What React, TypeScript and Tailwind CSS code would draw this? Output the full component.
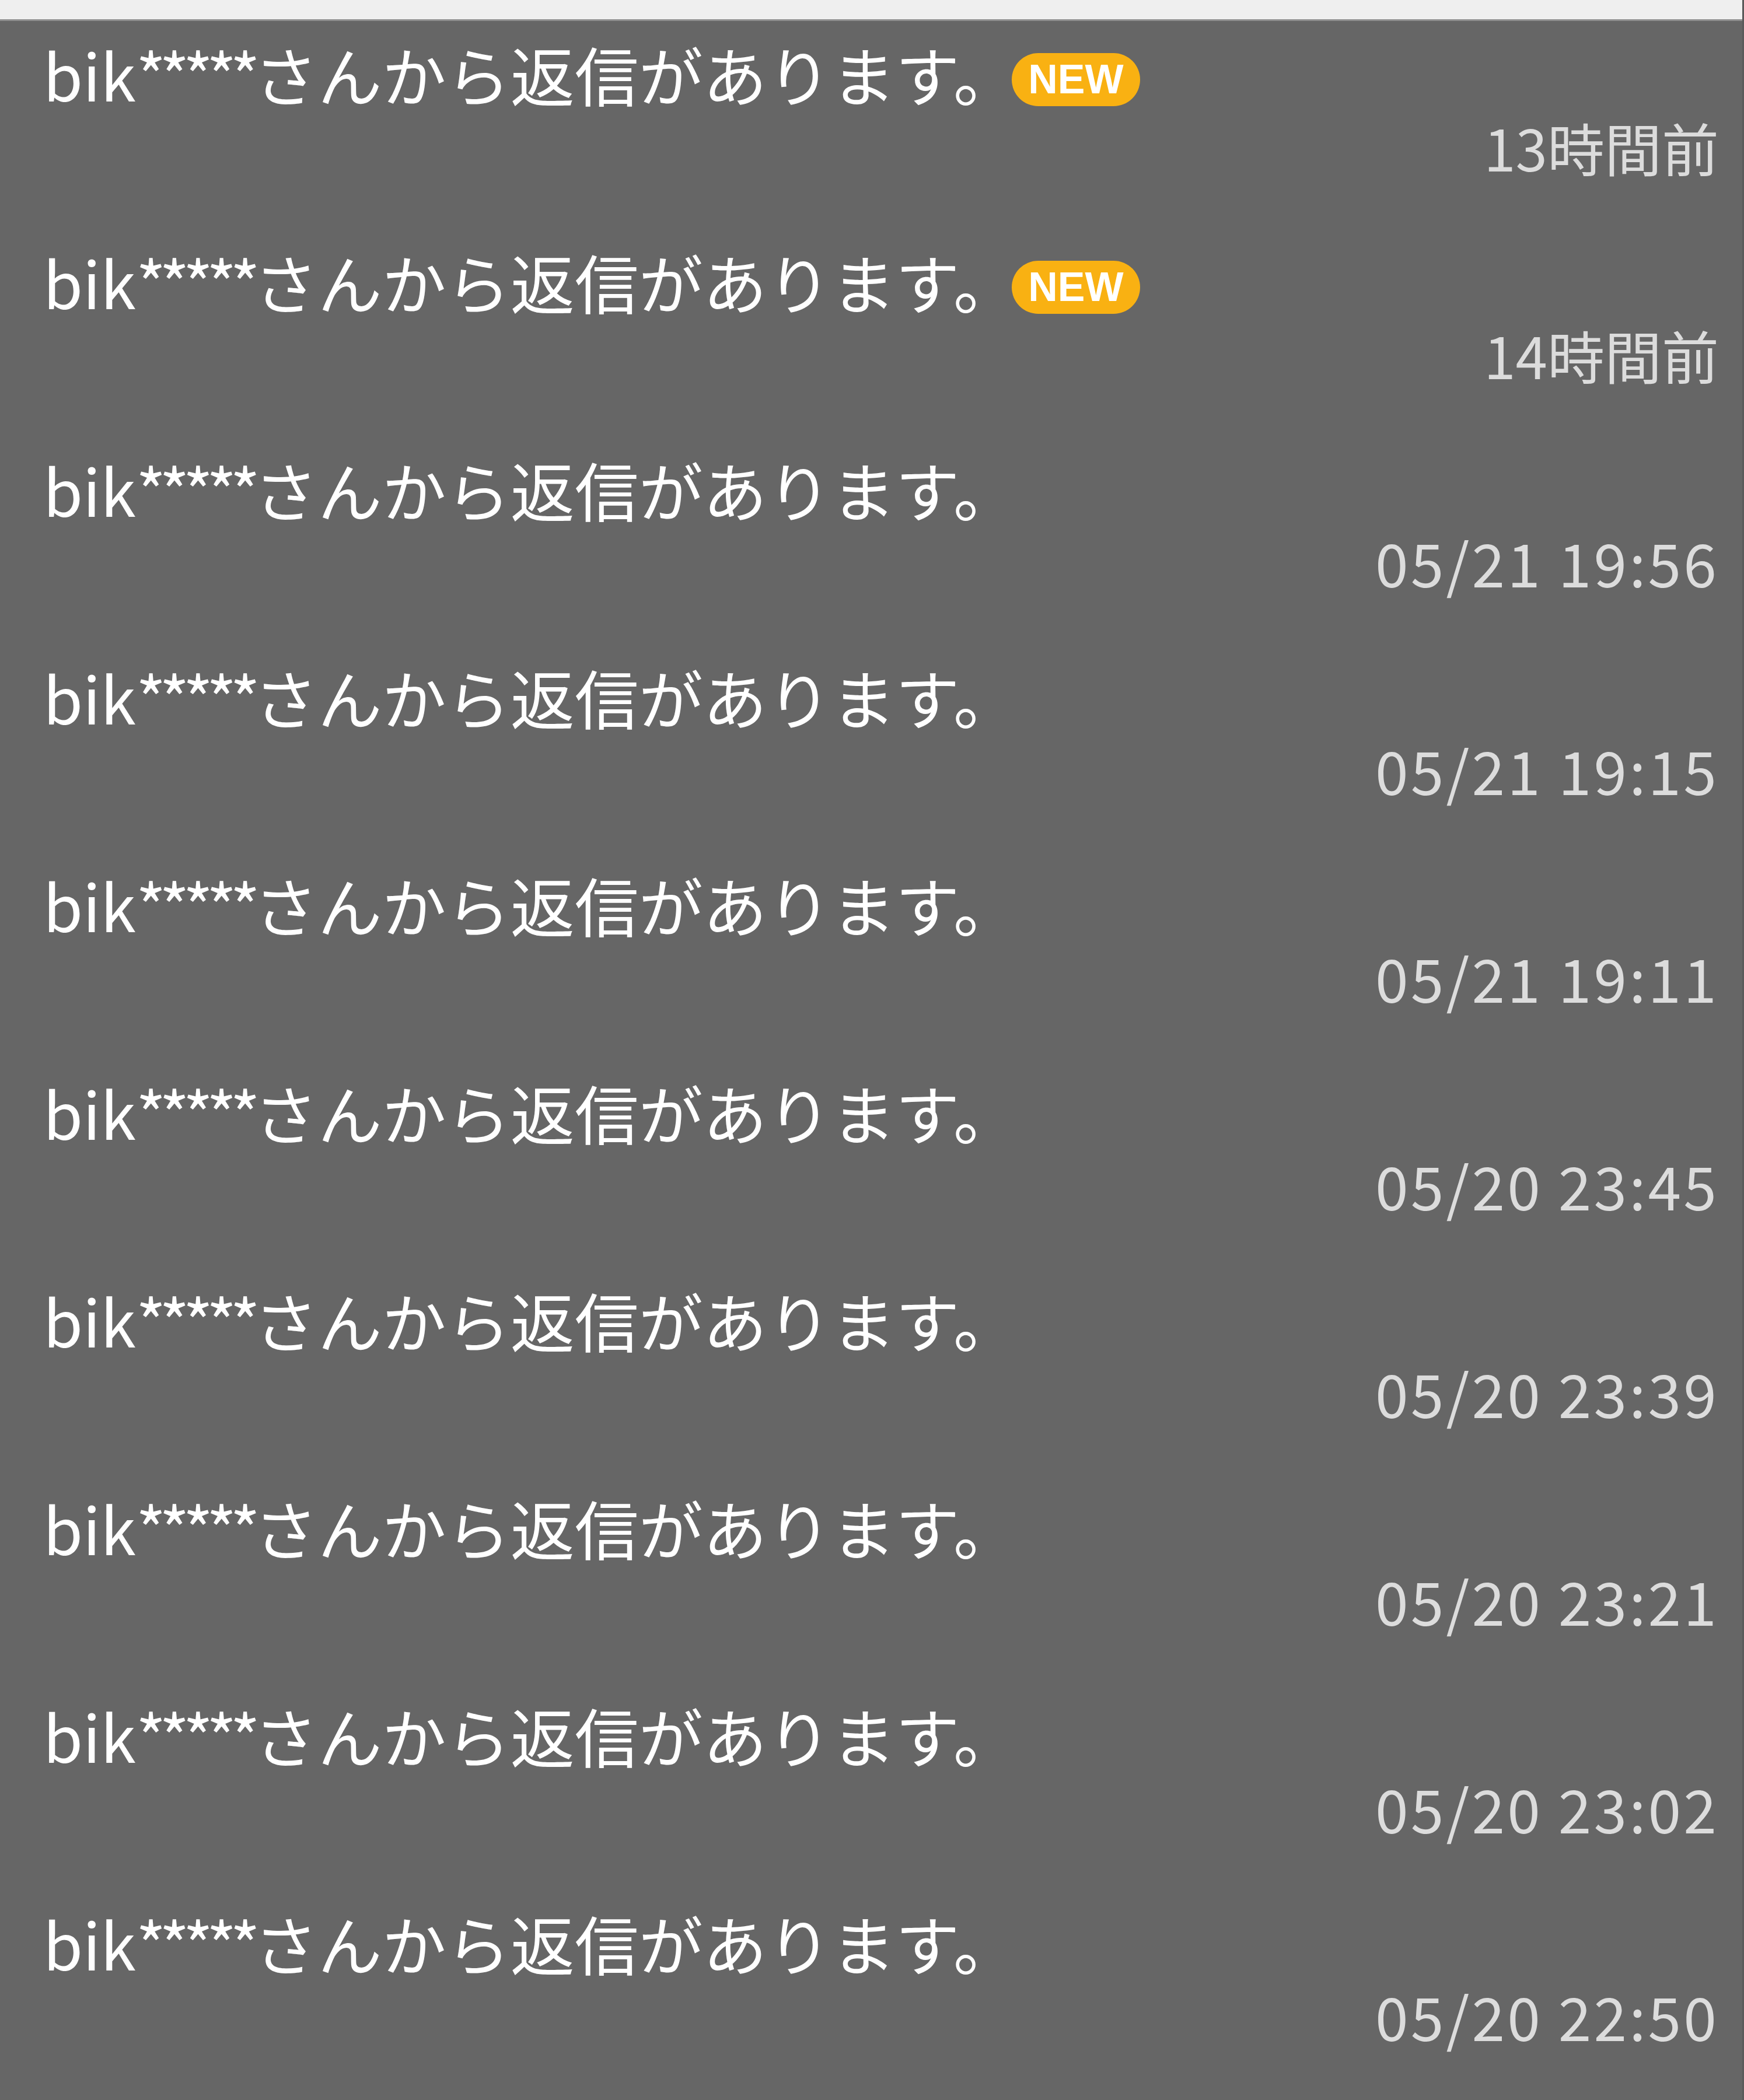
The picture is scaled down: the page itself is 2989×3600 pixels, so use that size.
const rows = [
  { time: '13時間前', isNew: true },
  { time: '14時間前', isNew: true },
  { time: '05/21 19:56', isNew: false },
  { time: '05/21 19:15', isNew: false },
  { time: '05/21 19:11', isNew: false },
  { time: '05/20 23:45', isNew: false },
  { time: '05/20 23:39', isNew: false },
  { time: '05/20 23:21', isNew: false },
  { time: '05/20 23:02', isNew: false },
  { time: '05/20 22:50', isNew: false },
];

function NewBadge() {
  return (
    <span className="-ml-[10px] mt-[20px] flex h-[91px] w-[220px] shrink-0 items-center justify-center rounded-full bg-[#f9b112] font-['Liberation_Sans',sans-serif] text-[70px] font-bold leading-none text-white">
      NEW
    </span>
  );
}

export default function App() {
  return (
    <div className="min-h-[3600px] border-r-[3px] border-[#5a5a5a] bg-[#666666] font-['Noto_Sans_CJK_JP',sans-serif]">
      {/* top bar */}
      <div className="h-[36px] border-b-[3px] border-[#8f8f8f] bg-[#efefef]" />

      <ul>
        {rows.map((row, i) => (
          <li key={i} className="h-[356px] pl-[74px] pr-[40px] pt-[20px]">
            <div className="flex h-[140px] items-center text-[110px] leading-[140px] text-white">
              <span className="whitespace-nowrap">
                bik<span className="tracking-[-0.1em]">*****</span>さんから返信があります。
              </span>
              {row.isNew && <NewBadge />}
            </div>
            <div
              className={`whitespace-nowrap text-right leading-[110px] text-[#dcdcdc] ${
                row.isNew ? 'text-[98px]' : 'text-[102px] tracking-[0.04em]'
              }`}
            >
              {row.time}
            </div>
          </li>
        ))}
      </ul>
    </div>
  );
}
